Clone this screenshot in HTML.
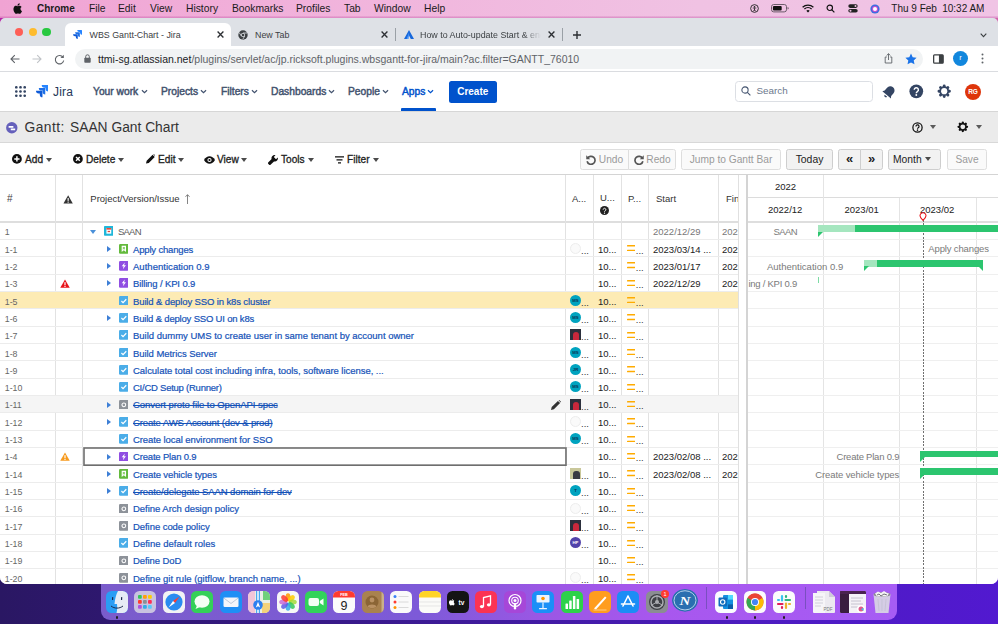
<!DOCTYPE html>
<html lang="en">
<head>
<meta charset="utf-8">
<title>WBS Gantt-Chart - Jira</title>
<style>
*{box-sizing:border-box;margin:0;padding:0}
html,body{width:998px;height:624px;overflow:hidden}
body{position:relative;font-family:"Liberation Sans",sans-serif;background:#3a1a96;color:#222}
.abs{position:absolute}
/* desktop */
#desk{position:absolute;left:0;top:0;width:998px;height:624px;background:linear-gradient(90deg,#2a1763 0%,#38198a 35%,#4c1cc0 75%,#5219d0 100%)}
/* menubar */
#menubar{position:absolute;left:0;top:0;width:998px;height:18px;z-index:5;background:linear-gradient(180deg,rgba(0,0,0,0) 0,rgba(0,0,0,0) 16px,rgba(190,70,160,.38) 17px,rgba(190,70,160,.32) 18px),linear-gradient(90deg,#f0a3d3 0%,#f1b4dc 35%,#f0c2e3 70%,#f0c4e5 100%);font-size:10.3px;color:#1a1a1a;white-space:nowrap}
#menubar span{position:absolute;top:2.5px;line-height:12px}
#menubar b{font-weight:bold;font-size:10px}
/* window */
#win{position:absolute;left:0;top:17px;width:998px;height:567.2px;background:#fff;border-radius:6px 6px 7px 7px;overflow:hidden}
#tabs{position:absolute;left:0;top:0;width:998px;height:29px;background:#dee1e6}
.tl{position:absolute;top:11.2px;width:8.2px;height:8.2px;border-radius:50%}
#tab1{position:absolute;left:65px;top:6px;width:166px;height:23px;background:#fff;border-radius:6px 6px 0 0}
.tabt{position:absolute;top:12px;font-size:8.9px;line-height:12px;color:#3c4043;white-space:nowrap}
.tx{position:absolute;top:9.5px;font-size:11px;line-height:12px;color:#3c4043}
#tb{position:absolute;left:0;top:29px;width:998px;height:26px;background:#fff;border-bottom:1px solid #dadce0}
#omni{position:absolute;left:75px;top:3px;width:848px;height:20px;border-radius:10px;background:#f1f3f4}
#url{position:absolute;left:98px;top:7px;font-size:10.5px;line-height:12px;color:#5f6368;white-space:nowrap}
#url b{font-weight:normal;color:#202124}
/* jira nav */
#nav{position:absolute;left:0;top:55px;width:998px;height:39px;background:#fff;font-size:10.3px;color:#42526e}
#nav .ni{position:absolute;top:14.2px;line-height:12px;font-size:10.25px;white-space:nowrap;-webkit-text-stroke:.45px #42526e}
#nav .ch{position:absolute;top:15.6px;width:7px;height:7px;margin-left:-.5px}
#create{position:absolute;left:449px;top:9px;width:47.5px;height:21.5px;border-radius:2.5px;background:#0052cc;color:#fff;font-weight:bold;font-size:10px;line-height:22px;text-align:center}
#search{position:absolute;left:735.4px;top:8.8px;width:137.4px;height:21.6px;border:1.3px solid #dcdfe4;border-radius:3.5px}
#search span{position:absolute;left:20px;top:3.5px;font-size:9.9px;line-height:12px;color:#6b778c}
/* gantt title */
#gt{position:absolute;left:0;top:94px;width:998px;height:32.5px;background:#ebebeb;border-top:1px solid #d6d6d6;border-bottom:2px solid #d8d8d8}
#gt .t{position:absolute;top:7px;font-size:13.8px;line-height:18px;color:#333;white-space:nowrap}
/* gantt toolbar */
#gtb{position:absolute;left:0;top:126px;width:998px;height:31.5px;background:#fff;border-bottom:1px solid #d4d4d4;font-size:10.15px;color:#222}
#gtb .m{position:absolute;top:10.8px;line-height:12px;white-space:nowrap;-webkit-text-stroke:.3px #222}
.caret{position:absolute;width:0;height:0;border-left:3.9px solid transparent;border-right:3.9px solid transparent;border-top:4.3px solid #4a4a4a;margin-top:-.6px;margin-left:-.6px}
.btn{position:absolute;top:5.5px;height:21.5px;border:1px solid #dedede;border-radius:2.5px;background:#fafafa;font-size:10.2px;line-height:19.5px;color:#9a9a9a;text-align:center;white-space:nowrap}
.btn.dk{color:#222;background:#f2f2f2;border-color:#cecece}
/* table */
#tbl{position:absolute;left:0;top:157.5px;width:998px;height:411px;background:#fff;overflow:hidden}
#th{position:absolute;left:0;top:0;width:739px;height:48px;border-bottom:2px solid #dedede;font-size:9.5px;color:#333}
#th span{position:absolute;line-height:12px;white-space:nowrap}
.vl{position:absolute;top:0;width:1px;background:#e2e2e2}
.row{position:absolute;left:0;width:739px;height:17.33px;border-bottom:1px solid #ececec;font-size:9.5px;line-height:12px;white-space:nowrap;top:0}
.row.hl{background:#fdebb4}
.row.hover{background:#f5f5f5}
.row .c{position:absolute;top:3.6px;color:#222}
.row .num{left:4.8px;color:#666;font-size:8.8px}
.row .tt{position:absolute;top:3.6px;color:#1452b8;text-decoration:none;-webkit-text-stroke:.2px #1452b8}
.row .tt.g{color:#5c5c5c;-webkit-text-stroke:0}
.row .tt.st{text-decoration:line-through}
.row .ti{position:absolute;top:3.9px;width:10px;height:10px;margin-left:.5px}
.ic{display:block;width:9.7px;height:9.7px}
.arr{position:absolute;width:0;height:0}
.arr.rt{top:5.9px;margin-left:.8px;border-top:3.9px solid transparent;border-bottom:3.9px solid transparent;border-left:4.2px solid #3d7fd6}
.arr.dn{top:7.2px;margin-left:.6px;border-left:3.7px solid transparent;border-right:3.7px solid transparent;border-top:4.3px solid #4a90d9}
.warn{position:absolute;left:60px;top:4.6px;width:10px;height:9.5px}
.row .ca{left:570px;top:2.8px}
.row .cu{left:598px}
.row .cp{left:626px}
.row .cs{left:653px}
.row .cf{left:722px}
.row .g{color:#777}
.av{display:inline-block;vertical-align:top;width:11px;height:11px;font-size:4.3px;line-height:11px;text-align:center;color:#fff;font-weight:bold;overflow:hidden;position:relative}
.av.rd{border-radius:50%}
.av.ghost{border-radius:50%;border:1px solid #ededed;background:#fafafa}
.av.ph1{background:#2b2f3c}
.av.ph1 i{position:absolute;left:3px;top:3px;width:6px;height:9px;background:#c8283c;border-radius:3px 3px 0 0}
.av.ph2{background:#c9c79a}
.av.ph2 i{position:absolute;left:3px;top:3px;width:7px;height:9px;background:#3a3a44;border-radius:3px 3px 0 0}
.dots{display:inline-block;vertical-align:top;line-height:14px;color:#333;margin-left:0}
.ca .dots{line-height:15px}
.eq{display:inline-block;vertical-align:top;width:8.2px;height:6.2px;margin-top:1.6px;margin-left:.8px;margin-right:.8px}
.selbox{position:absolute;left:82.5px;top:-1px;width:484px;height:19px}
.pen{position:absolute;left:551px;top:3.8px;width:10px;height:10px}
/* gantt */
#split{position:absolute;left:738px;top:0;width:10px;height:411px;background:#fff;border-left:1px solid #e0e0e0;border-right:2px solid #d4d4d4}
#gantt{position:absolute;left:748px;top:0;width:250px;height:411px;overflow:hidden;font-size:9.5px}
#gantt .hd{position:absolute;line-height:12px;color:#222;white-space:nowrap}
.gl{position:absolute;left:0;width:250px;height:1px;background:#efefef}
.gv{position:absolute;top:0;width:1px;height:411px;background:#e4e4e4}
.glab{position:absolute;color:#7a7a7a;line-height:12px;white-space:nowrap}
.bar{position:absolute;height:7px;background:#2cc56f}
/* dock */
#dock{position:absolute;left:100.5px;top:582px;width:796.5px;height:37.5px;border-radius:0 0 9px 9px;background:linear-gradient(90deg,#7a5ccb 0%,#7d5ad8 40%,#9a57e4 55%,#a857ee 70%,#a65cf4 100%)}
.di{position:absolute;top:9px;width:22px;height:22px;border-radius:5.5px;overflow:hidden}
.dd{position:absolute;top:34.3px;width:2.4px;height:2.4px;border-radius:50%;background:#222}
</style>
</head>
<body>
<div id="desk"></div>
<div class="abs" style="left:0;top:10px;width:998px;height:20px;background:linear-gradient(90deg,#b01ea6,#d46cc8 40%,#e7b6e2 100%)"></div>

<!-- macOS menu bar -->
<div id="menubar">
<svg class="abs" style="left:13px;top:3px;width:9px;height:11px" viewBox="0 0 14 17"><path d="M11.6 9c0-2 1.6-2.9 1.7-3-1-1.400-2.400-1.600-2.900-1.600-1.200-.1-2.400.7-3 .7s-1.600-.7-2.600-.7C3.400 4.400 2.100 5.200 1.400 6.400c-1.500 2.500-.4 6.300 1 8.300.7 1 1.500 2.100 2.600 2.100 1 0 1.400-.7 2.700-.7s1.600.7 2.700.7 1.800-1 2.500-2c.8-1.100 1.100-2.200 1.100-2.300-.1 0-2.400-.9-2.400-3.500zM9.500 3c.6-.7 1-1.600.8-2.600-.8 0-1.800.5-2.400 1.200-.5.600-1 1.600-.8 2.500.9.100 1.800-.4 2.400-1.100z" fill="#111"/></svg>
<span style="left:37px"><b>Chrome</b></span>
<span style="left:89px">File</span>
<span style="left:118px">Edit</span>
<span style="left:150px">View</span>
<span style="left:186px">History</span>
<span style="left:232px">Bookmarks</span>
<span style="left:296px">Profiles</span>
<span style="left:344px">Tab</span>
<span style="left:374px">Window</span>
<span style="left:424px">Help</span>
<!-- right status icons -->
<svg class="abs" style="left:750px;top:4px;width:9px;height:9px" viewBox="0 0 10 10"><circle cx="5" cy="5" r="4.300" fill="none" stroke="#222" stroke-width="1"/><circle cx="5" cy="3.200" r=".9" fill="#222"/><path d="M3 4.500h4M5 4.500v3M3.800 8l1.200-2 1.200 2" stroke="#222" stroke-width=".8" fill="none"/></svg>
<svg class="abs" style="left:771px;top:4.300px;width:18px;height:8.400px" viewBox="0 0 18 8.400"><rect x=".5" y=".5" width="15" height="7.400" rx="2.200" fill="none" stroke="#6a5a68" stroke-width="1"/><rect x="1.900" y="1.900" width="8.800" height="4.600" rx="1.100" fill="#111"/><path d="M16.600 2.900v2.600c.8-.2 1.100-.8 1.100-1.300s-.3-1.100-1.100-1.300z" fill="#6a5a68"/></svg>
<svg class="abs" style="left:802px;top:4px;width:12px;height:9px" viewBox="0 0 12 9"><path d="M.6 3.200a8 8 0 0 1 10.800 0M2.400 5a5.300 5.300 0 0 1 7.200 0" stroke="#111" stroke-width="1.300" fill="none"/><path d="M4.300 6.800a2.500 2.500 0 0 1 3.400 0L6 8.600z" fill="#111"/></svg>
<svg class="abs" style="left:826px;top:4px;width:9px;height:9px" viewBox="0 0 10 10"><circle cx="4.200" cy="4.200" r="3" fill="none" stroke="#111" stroke-width="1.300"/><path d="M6.500 6.500L9.300 9.300" stroke="#111" stroke-width="1.400"/></svg>
<svg class="abs" style="left:848px;top:4px;width:10px;height:9px" viewBox="0 0 10 9"><rect x=".3" y=".3" width="9.400" height="3.600" rx="1.800" fill="#222"/><circle cx="7.500" cy="2.100" r="1" fill="#eec0e0"/><rect x=".3" y="5" width="9.400" height="3.600" rx="1.800" fill="#222"/><circle cx="2.500" cy="6.800" r="1" fill="#eec0e0"/></svg>
<svg class="abs" style="left:870px;top:3.500px;width:10px;height:10px" viewBox="0 0 10 10"><circle cx="5" cy="5" r="4.600" fill="#3b6fe0"/><circle cx="5" cy="5" r="3" fill="#d04ad0"/><circle cx="5" cy="5" r="2" fill="#fff"/></svg>
<span style="left:891.300px;font-size:10px">Thu 9 Feb</span>
<span style="left:942.200px;font-size:10px">10:32 AM</span>
</div>

<!-- Dock -->
<div id="dock">
<div class="di" style="left:5.0px;width:22px;"><svg width="100%" height="100%" viewBox="0 0 22 22" preserveAspectRatio="none" style="display:block"><rect width="22" height="22" fill="#2a9df4"/><path d="M12 0h10v22H10.500c.8-3 .8-6 .5-9H8.500C9 8 10 3.500 12 0z" fill="#e6ecf5"/><path d="M5 15c3.500 2.800 8.500 2.800 12 0" stroke="#1b2a4a" stroke-width="1" fill="none"/><rect x="6" y="6" width="1.200" height="3" rx=".6" fill="#1b2a4a"/><rect x="15" y="6" width="1.200" height="3" rx=".6" fill="#1b2a4a"/></svg></div>
<div class="di" style="left:33.5px;width:22px;"><svg width="100%" height="100%" viewBox="0 0 22 22" preserveAspectRatio="none" style="display:block"><rect width="22" height="22" fill="#c9c2e0"/><rect x="4" y="4" width="3.800" height="3.800" rx="1" fill="#34c759"/><rect x="9" y="4" width="3.800" height="3.800" rx="1" fill="#ff9f0a"/><rect x="14" y="4" width="3.800" height="3.800" rx="1" fill="#ffcc00"/><rect x="4" y="9" width="3.800" height="3.800" rx="1" fill="#ff3b30"/><rect x="9" y="9" width="3.800" height="3.800" rx="1" fill="#8e8e93"/><rect x="14" y="9" width="3.800" height="3.800" rx="1" fill="#ff2d55"/><rect x="4" y="14" width="3.800" height="3.800" rx="1" fill="#af52de"/><rect x="9" y="14" width="3.800" height="3.800" rx="1" fill="#32ade6"/><rect x="14" y="14" width="3.800" height="3.800" rx="1" fill="#5ac8fa"/></svg></div>
<div class="di" style="left:62.0px;width:22px;"><svg width="100%" height="100%" viewBox="0 0 22 22" preserveAspectRatio="none" style="display:block"><rect width="22" height="22" fill="#f2f2f4"/><circle cx="11" cy="11" r="8.600" fill="#2a8cf0"/><path d="M16.500 5.500L12 12l-2-2z" fill="#ff3b30"/><path d="M5.500 16.500L10 10l2 2z" fill="#fff"/></svg></div>
<div class="di" style="left:90.5px;width:22px;"><svg width="100%" height="100%" viewBox="0 0 22 22" preserveAspectRatio="none" style="display:block"><rect width="22" height="22" fill="#34d058"/><ellipse cx="11" cy="10.500" rx="7.500" ry="6.200" fill="#f4fff4"/><path d="M6 14.500l-1.500 3.500 4.500-2z" fill="#f4fff4"/></svg></div>
<div class="di" style="left:119.0px;width:22px;"><svg width="100%" height="100%" viewBox="0 0 22 22" preserveAspectRatio="none" style="display:block"><rect width="22" height="22" fill="#1e8ff5"/><rect x="3.500" y="6.500" width="15" height="9.500" rx="1.200" fill="#f4f6fa"/><path d="M3.800 7l7.200 5.500L18.200 7" stroke="#b8c4d6" stroke-width=".9" fill="none"/></svg></div>
<div class="di" style="left:147.5px;width:22px;"><svg width="100%" height="100%" viewBox="0 0 22 22" preserveAspectRatio="none" style="display:block"><rect width="22" height="22" fill="#e9efe4"/><path d="M0 0h7v22H0z" fill="#f2c5d8"/><path d="M15 0h7v9h-7z" fill="#6fd07a"/><path d="M14 12h8v10h-8z" fill="#f4d27a"/><path d="M8 0h4v22H8z" fill="#4aa8f0"/><path d="M9.300 0h1.400v22H9.300z" fill="#fff"/><circle cx="10" cy="14" r="4.800" fill="#2d7ff0"/><path d="M10 10.800l2.200 5.600L10 15.200l-2.200 1.200z" fill="#fff"/></svg></div>
<div class="di" style="left:176.0px;width:22px;"><svg width="100%" height="100%" viewBox="0 0 22 22" preserveAspectRatio="none" style="display:block"><rect width="22" height="22" fill="#f7f7f7"/><ellipse cx="11" cy="6.200" rx="2.500" ry="4" fill="#ff9500" fill-opacity=".85" transform="rotate(0 11 11)"/><ellipse cx="11" cy="6.200" rx="2.500" ry="4" fill="#ffcc00" fill-opacity=".85" transform="rotate(45 11 11)"/><ellipse cx="11" cy="6.200" rx="2.500" ry="4" fill="#a4d93a" fill-opacity=".85" transform="rotate(90 11 11)"/><ellipse cx="11" cy="6.200" rx="2.500" ry="4" fill="#34c759" fill-opacity=".85" transform="rotate(135 11 11)"/><ellipse cx="11" cy="6.200" rx="2.500" ry="4" fill="#32ade6" fill-opacity=".85" transform="rotate(180 11 11)"/><ellipse cx="11" cy="6.200" rx="2.500" ry="4" fill="#5e5ce6" fill-opacity=".85" transform="rotate(225 11 11)"/><ellipse cx="11" cy="6.200" rx="2.500" ry="4" fill="#c86dd7" fill-opacity=".85" transform="rotate(270 11 11)"/><ellipse cx="11" cy="6.200" rx="2.500" ry="4" fill="#ff3b30" fill-opacity=".85" transform="rotate(315 11 11)"/></svg></div>
<div class="di" style="left:204.0px;width:22px;"><svg width="100%" height="100%" viewBox="0 0 22 22" preserveAspectRatio="none" style="display:block"><rect width="22" height="22" fill="#32d35a"/><rect x="3.500" y="7" width="10.500" height="8" rx="2" fill="#f4fff4"/><path d="M14.800 10l3.700-2.600v7.200L14.800 12z" fill="#f4fff4"/></svg></div>
<div class="di" style="left:232.5px;width:22px;"><svg width="100%" height="100%" viewBox="0 0 22 22" preserveAspectRatio="none" style="display:block"><rect width="22" height="22" fill="#fbfbfb"/><rect width="22" height="6.500" fill="#ff3b30"/><text x="11" y="5" font-size="3.800" text-anchor="middle" fill="#fff" font-family="Liberation Sans, sans-serif" font-weight="bold">FEB</text><text x="11" y="18.500" font-size="12.500" text-anchor="middle" fill="#222" font-family="Liberation Sans, sans-serif">9</text></svg></div>
<div class="di" style="left:261.0px;width:22px;"><svg width="100%" height="100%" viewBox="0 0 22 22" preserveAspectRatio="none" style="display:block"><rect width="22" height="22" fill="#a9824f"/><rect x="19.500" width="2.500" height="22" fill="#c9b08a"/><circle cx="10" cy="11" r="6.500" fill="#8b6535"/><circle cx="10" cy="9" r="2.400" fill="#b99163"/><path d="M5.500 15.500c1-2.800 8-2.800 9 0a6.500 6.500 0 0 1-9 0z" fill="#b99163"/></svg></div>
<div class="di" style="left:289.5px;width:22px;"><svg width="100%" height="100%" viewBox="0 0 22 22" preserveAspectRatio="none" style="display:block"><rect width="22" height="22" fill="#fafafa"/><circle cx="5" cy="5.500" r="1.500" fill="#3b82f6"/><circle cx="5" cy="11" r="1.500" fill="#ff3b30"/><circle cx="5" cy="16.500" r="1.500" fill="#ff9500"/><path d="M8.500 5.500h10M8.500 11h10M8.500 16.500h10" stroke="#d6d6d6" stroke-width=".9"/></svg></div>
<div class="di" style="left:318.0px;width:22px;"><svg width="100%" height="100%" viewBox="0 0 22 22" preserveAspectRatio="none" style="display:block"><rect width="22" height="22" fill="#fbfbf8"/><rect width="22" height="6.500" fill="#ffd426"/><path d="M0 11h22M0 15h22" stroke="#dedede" stroke-width=".7"/></svg></div>
<div class="di" style="left:346.0px;width:22px;"><svg width="100%" height="100%" viewBox="0 0 22 22" preserveAspectRatio="none" style="display:block"><rect width="22" height="22" fill="#141414"/><path d="M7.200 9.800c-.5-.6-1.200-.6-1.700-.4-.5.200-.8.200-1.300 0-1-.4-2.200.4-2.200 2 0 1.500 1 3 1.900 3 .5 0 .7-.3 1.200-.3s.7.300 1.200.3c.6 0 1.200-.8 1.500-1.600-1.200-.6-1.200-2.300-.6-3z M5.200 9c.5-.1 1-.7.9-1.300-.6.100-1.100.6-.9 1.300z" fill="#fff"/><text x="14.500" y="14" font-size="6.500" text-anchor="middle" fill="#fff" font-family="Liberation Sans, sans-serif" font-weight="bold">tv</text></svg></div>
<div class="di" style="left:374.5px;width:22px;"><svg width="100%" height="100%" viewBox="0 0 22 22" preserveAspectRatio="none" style="display:block"><rect width="22" height="22" fill="#fb3353"/><path d="M8.500 15.500V6.500l7-1.700v8.700" stroke="#fff" stroke-width="1.300" fill="none"/><ellipse cx="6.900" cy="15.600" rx="2" ry="1.600" fill="#fff"/><ellipse cx="13.900" cy="13.800" rx="2" ry="1.600" fill="#fff"/></svg></div>
<div class="di" style="left:403.0px;width:22px;"><svg width="100%" height="100%" viewBox="0 0 22 22" preserveAspectRatio="none" style="display:block"><rect width="22" height="22" fill="#a647d8"/><circle cx="11" cy="9.500" r="6" fill="none" stroke="#fff" stroke-width="1.200"/><circle cx="11" cy="9.500" r="3.300" fill="none" stroke="#fff" stroke-width="1.100"/><circle cx="11" cy="9.500" r="1.500" fill="#fff"/><rect x="9.800" y="12" width="2.400" height="6.500" rx="1.200" fill="#fff"/><rect x="8" y="13.200" width="6" height="6" fill="#a647d8" opacity="0"/></svg></div>
<div class="di" style="left:431.5px;width:22px;"><svg width="100%" height="100%" viewBox="0 0 22 22" preserveAspectRatio="none" style="display:block"><rect width="22" height="22" fill="#1b8ff7"/><rect x="4.500" y="4" width="13" height="7.500" rx=".8" fill="#eaf3ff"/><circle cx="11" cy="7.500" r="1.800" fill="#ff9500"/><rect x="10.400" y="11.500" width="1.200" height="6" fill="#eaf3ff"/><rect x="7" y="17" width="8" height="1.200" rx=".5" fill="#eaf3ff"/></svg></div>
<div class="di" style="left:460.0px;width:22px;"><svg width="100%" height="100%" viewBox="0 0 22 22" preserveAspectRatio="none" style="display:block"><rect width="22" height="22" fill="#2dd24a"/><rect x="4.500" y="12.500" width="2.500" height="5.500" rx=".6" fill="#fff"/><rect x="8.200" y="9.500" width="2.500" height="8.500" rx=".6" fill="#fff"/><rect x="11.900" y="5" width="2.500" height="13" rx=".6" fill="#fff"/><rect x="15.600" y="8" width="2.500" height="10" rx=".6" fill="#fff"/></svg></div>
<div class="di" style="left:488.0px;width:22px;"><svg width="100%" height="100%" viewBox="0 0 22 22" preserveAspectRatio="none" style="display:block"><rect width="22" height="22" fill="#ff9d1e"/><path d="M5 17.500L16 5.500l1.500 1.300L7 18.500z" fill="#fff"/><path d="M4.500 19h13" stroke="#ffd9a0" stroke-width=".8"/></svg></div>
<div class="di" style="left:516.5px;width:22px;"><svg width="100%" height="100%" viewBox="0 0 22 22" preserveAspectRatio="none" style="display:block"><rect width="22" height="22" fill="#1c8df5"/><path d="M11 5l-5 10M11 5l5 10M4.500 13h13" stroke="#fff" stroke-width="1.600" fill="none" stroke-linecap="round"/></svg></div>
<div class="di" style="left:545.0px;width:22px;"><svg width="100%" height="100%" viewBox="0 0 22 22" preserveAspectRatio="none" style="display:block"><rect width="22" height="22" fill="#8b8d92"/><circle cx="11" cy="11" r="8" fill="#3e4045"/><circle cx="11" cy="11" r="6" fill="none" stroke="#a9abb0" stroke-width="1.500"/><circle cx="11" cy="11" r="2" fill="#a9abb0"/><path d="M11 11V4M11 11l6 3.500M11 11l-6 3.500" stroke="#a9abb0" stroke-width="1"/></svg></div>
<div class="abs" style="left:560.5px;top:7.500px;width:8px;height:8px;border-radius:50%;background:#ff3b30;color:#fff;font-size:5.500px;line-height:8px;text-align:center">1</div>
<div class="di" style="left:571.5px;width:26px;top:7.300px;height:22.700px;border-radius:50%"><svg width="100%" height="100%" viewBox="0 0 26 26" preserveAspectRatio="none" style="display:block"><circle cx="13" cy="13" r="13" fill="#2a6fb0"/><circle cx="13" cy="13" r="11" fill="none" stroke="#bcd6ee" stroke-width="1"/><text x="13" y="18" font-size="15" text-anchor="middle" fill="#fff" font-family="Liberation Serif, serif" font-weight="bold" font-style="italic">N</text></svg></div>
<div class="abs" style="left:605.0px;top:5px;width:1px;height:22px;background:#7a4fc0"></div>
<div class="di" style="left:614.5px;width:22px;"><svg width="100%" height="100%" viewBox="0 0 22 22" preserveAspectRatio="none" style="display:block"><rect width="22" height="22" fill="#fafcff"/><rect x="8" y="4" width="10" height="14" rx="1" fill="#1490df"/><rect x="13" y="4" width="5" height="4.600" fill="#50d9ff"/><rect x="13" y="13.400" width="5" height="4.600" fill="#0a5ea8"/><rect x="3.500" y="6.500" width="8.500" height="9" rx="1" fill="#0f6cbd"/><circle cx="7.700" cy="11" r="2.200" fill="none" stroke="#fff" stroke-width="1.100"/></svg></div>
<div class="di" style="left:643.0px;width:22px;"><svg width="100%" height="100%" viewBox="0 0 22 22" preserveAspectRatio="none" style="display:block"><rect width="22" height="22" fill="#fbfbfb"/><circle cx="11" cy="11" r="8.500" fill="#ea4335"/><path d="M11 11L3.640 6.750A8.500 8.500 0 0 0 11 19.500z" fill="#34a853"/><path d="M11 11v8.500A8.500 8.500 0 0 0 18.360 6.750z" fill="#fbbc05"/><path d="M3.640 6.750A8.500 8.500 0 0 1 18.360 6.750L11 11z" fill="#ea4335"/><circle cx="11" cy="11" r="4" fill="#fff"/><circle cx="11" cy="11" r="3.100" fill="#4285f4"/></svg></div>
<div class="di" style="left:672.0px;width:22px;"><svg width="100%" height="100%" viewBox="0 0 22 22" preserveAspectRatio="none" style="display:block"><rect width="22" height="22" fill="#fbfbfb"/><g stroke-width="2.200" stroke-linecap="round"><path d="M9 5v4.500" stroke="#36c5f0"/><path d="M5 9h1" stroke="#36c5f0"/><path d="M13 17v-4.500" stroke="#ecb22e"/><path d="M17 13h-1" stroke="#ecb22e"/><path d="M17 9h-4.500" stroke="#2eb67d"/><path d="M13 5v1" stroke="#2eb67d"/><path d="M5 13h4.500" stroke="#e01e5a"/><path d="M9 17v-1" stroke="#e01e5a"/></g></svg></div>
<div class="abs" style="left:704.0px;top:5px;width:1px;height:22px;background:#7a4fc0"></div>
<div class="di" style="left:712.0px;width:22px;border-radius:1px"><svg width="100%" height="100%" viewBox="0 0 22 22" preserveAspectRatio="none" style="display:block"><path d="M4 0h12l6 6v16H4z" fill="#eceaf0"/><path d="M0 2h12v20H0z" fill="#f6f5f8"/><path d="M16 0v6h6z" fill="#cfcbd8"/><path d="M2 6h8M2 9h8M2 12h8M2 15h6" stroke="#c9c6d2" stroke-width=".8"/><text x="15" y="20" font-size="4.500" text-anchor="middle" fill="#777" font-family="Liberation Sans, sans-serif">PDF</text></svg></div>
<div class="di" style="left:739.5px;width:26px;border-radius:1px"><svg width="100%" height="100%" viewBox="0 0 26 22" preserveAspectRatio="none" style="display:block"><rect width="26" height="22" fill="#f4f2f6"/><rect width="9" height="22" fill="#3a1d3f"/><rect width="26" height="3" fill="#4a2350"/><path d="M11 7h12M11 10h10M11 13h12M11 16h7" stroke="#bdb8c8" stroke-width=".8"/><circle cx="21" cy="18" r="4" fill="#fff"/><circle cx="21" cy="18" r="2.500" fill="#e05a8a"/><path d="M21 18l2.500-1v3z" fill="#36c5f0"/></svg></div>
<div class="di" style="left:771.0px;width:20px;border-radius:1px"><svg width="100%" height="100%" viewBox="0 0 20 22" preserveAspectRatio="none" style="display:block"><path d="M1.500 3h17l-2 19h-13z" fill="#d9d6e4" fill-opacity=".92"/><ellipse cx="10" cy="3.500" rx="8.500" ry="2.500" fill="#8d8a96"/><path d="M3 2.500l3-2 3 1.500 3-2 3 2 2 .5-2 3H5z" fill="#f3f3f3"/><path d="M5 4l2-1 2 2 3-2 3 1" stroke="#55525e" stroke-width=".8" fill="none"/><path d="M6 8l1 12M10 8v12M14 8l-1 12" stroke="#c2bfd0" stroke-width=".7"/></svg></div>
<div class="dd" style="left:15.0px"></div>
<div class="dd" style="left:625.0px"></div>
<div class="dd" style="left:653.5px"></div>
<div class="dd" style="left:682.5px"></div>
</div>
<svg class="abs" style="left:0;top:18px;width:5px;height:5px;z-index:6" viewBox="0 0 5 5"><path d="M0 0h5A5 5 0 0 0 0 5z" fill="#b526a8"/></svg>
<svg class="abs" style="left:993px;top:18px;width:5px;height:5px;z-index:6" viewBox="0 0 5 5"><path d="M5 0H0A5 5 0 0 1 5 5z" fill="#d263ad"/></svg>
<!-- Chrome window -->
<div id="win">
 <div id="tabs">
  <div class="tl" style="left:14.600px;background:#fe5f57"></div>
  <div class="tl" style="left:28.500px;background:#febc2e"></div>
  <div class="tl" style="left:42.400px;background:#28c840"></div>
  <div id="tab1"></div>
  <svg class="abs" style="left:73px;top:13px;width:9px;height:9px" viewBox="0 0 10 10"><path d="M9.500 0H4.700a2.200 2.200 0 0 0 2.200 2.200h.9v.9A2.200 2.200 0 0 0 10 5.300V.5a.5.500 0 0 0-.5-.5z" fill="#2684ff"/><path d="M7.100 2.400H2.300a2.200 2.200 0 0 0 2.200 2.200h.9v.9a2.200 2.200 0 0 0 2.200 2.200V2.900a.5.500 0 0 0-.5-.5z" fill="#1d6fe6"/><path d="M4.800 4.800H0A2.200 2.200 0 0 0 2.200 7h.9v.9A2.200 2.200 0 0 0 5.300 10V5.300a.5.500 0 0 0-.5-.5z" fill="#0f5bd8"/></svg>
  <span class="tabt" style="left:89.500px">WBS Gantt-Chart - Jira</span>
  <svg class="abs" style="left:217px;top:14px;width:7px;height:7px;margin:-.5px" viewBox="0 0 6 6"><path d="M.5.500l5 5M5.500.500l-5 5" stroke="#2c2f33" stroke-width="1.150"/></svg>
  <svg class="abs" style="left:238px;top:12.5px;width:10px;height:10px" viewBox="0 0 10 10"><circle cx="5" cy="5" r="4.700" fill="#3c4043"/><circle cx="5" cy="5" r="2.100" fill="#dee1e6"/><circle cx="5" cy="5" r="1.300" fill="#3c4043"/><path d="M5 3h4M3.300 6L1.200 2.600M6.700 6l-2 3.400" stroke="#dee1e6" stroke-width=".8"/></svg>
  <span class="tabt" style="left:255px">New Tab</span>
  <svg class="abs" style="left:381px;top:14px;width:7px;height:7px;margin:-.5px" viewBox="0 0 6 6"><path d="M.5.500l5 5M5.500.500l-5 5" stroke="#2c2f33" stroke-width="1.150"/></svg>
  <div class="abs" style="left:395px;top:11px;width:1px;height:13px;background:#9aa0a6"></div>
  <svg class="abs" style="left:404px;top:13px;width:10px;height:9px" viewBox="0 0 10 9"><path d="M5 0L0 9h3.200L5 5.500 6.800 9H10z" fill="#1868db"/><path d="M5 2.800L2.600 9h2z" fill="#4c9aff"/></svg>
  <span class="tabt" style="left:420px;width:121px;overflow:hidden;-webkit-mask-image:linear-gradient(90deg,#000 85%,transparent)">How to Auto-update Start &amp; end</span>
  <svg class="abs" style="left:548px;top:14px;width:7px;height:7px;margin:-.5px" viewBox="0 0 6 6"><path d="M.5.500l5 5M5.500.500l-5 5" stroke="#2c2f33" stroke-width="1.150"/></svg>
  <div class="abs" style="left:562px;top:11px;width:1px;height:13px;background:#9aa0a6"></div>
  <svg class="abs" style="left:573px;top:13.5px;width:8px;height:8px" viewBox="0 0 8 8"><path d="M4 0v8M0 4h8" stroke="#2c2f33" stroke-width="1.400"/></svg>
  <svg class="abs" style="left:980px;top:15.5px;width:7px;height:5px" viewBox="0 0 7 5"><path d="M.7.700L3.500 3.600 6.300.7" stroke="#3c4043" stroke-width="1.100" fill="none"/></svg>
 </div>
 <div id="tb">
  <svg class="abs" style="left:10px;top:8px;width:10px;height:10px" viewBox="0 0 10 10"><path d="M9.500 5H1.200M4.800 1.200L1 5l3.800 3.800" stroke="#5f6368" stroke-width="1.100" fill="none"/></svg>
  <svg class="abs" style="left:32px;top:8px;width:10px;height:10px" viewBox="0 0 10 10"><path d="M.5 5h8.300M5.200 1.200L9 5 5.200 8.800" stroke="#c0c3c7" stroke-width="1.100" fill="none"/></svg>
  <svg class="abs" style="left:54px;top:7.500px;width:11px;height:11px" viewBox="0 0 11 11"><path d="M9 3.200A4.200 4.200 0 1 0 9.700 6.500" stroke="#5f6368" stroke-width="1.100" fill="none"/><path d="M9.800.8v3.300H6.500z" fill="#5f6368"/></svg>
  <div id="omni"></div>
  <svg class="abs" style="left:84px;top:8px;width:7px;height:9px" viewBox="0 0 7 9"><rect x=".3" y="3.700" width="6.400" height="5" rx=".8" fill="#5f6368"/><path d="M1.700 4V2.600a1.800 1.800 0 0 1 3.600 0V4" stroke="#5f6368" stroke-width="1" fill="none"/></svg>
  <div id="url"><b>ttmi-sg.atlassian.net</b>/plugins/servlet/ac/jp.ricksoft.plugins.wbsgantt-for-jira/main?ac.filter=GANTT_76010</div>
  <svg class="abs" style="left:884px;top:7px;width:9px;height:11px" viewBox="0 0 9 11"><path d="M2.800 4H1.200v6h6.600V4H6.200M4.500 7V.8M2.600 2.500L4.500.7l1.900 1.800" stroke="#5f6368" stroke-width=".9" fill="none"/></svg>
  <svg class="abs" style="left:905px;top:6.500px;width:12px;height:12px" viewBox="0 0 12 12"><path d="M6 .6l1.700 3.600 3.900.5-2.900 2.700.8 3.900L6 9.400l-3.500 1.900.8-3.900L.4 4.700l3.900-.5z" fill="#1a73e8"/></svg>
  <svg class="abs" style="left:932.800px;top:7.500px;width:10.800px;height:10px" viewBox="0 0 10 9"><rect x=".6" y=".6" width="8.800" height="7.800" rx=".8" fill="none" stroke="#3c4043" stroke-width="1.200"/><rect x="5.500" y=".6" width="3.900" height="7.800" fill="#3c4043"/></svg>
  <div class="abs" style="left:953px;top:5px;width:15px;height:15px;border-radius:50%;background:#1287dd;color:#fff;font-size:7.500px;line-height:14px;text-align:center">r</div>
  <svg class="abs" style="left:980.700px;top:7px;width:3px;height:11px" viewBox="0 0 3 11"><circle cx="1.500" cy="1.500" r="1" fill="#5f6368"/><circle cx="1.500" cy="5.500" r="1" fill="#5f6368"/><circle cx="1.500" cy="9.500" r="1" fill="#5f6368"/></svg>
 </div>

 <!-- Jira navigation -->
 <div id="nav">
  <svg class="abs" style="left:15px;top:14px;width:11px;height:11px" viewBox="0 0 11 11"><g fill="#344563"><rect x="0" y="0" width="2.600" height="2.600" rx="1.200"/><rect x="4.200" y="0" width="2.600" height="2.600" rx="1.200"/><rect x="8.400" y="0" width="2.600" height="2.600" rx="1.200"/><rect x="0" y="4.200" width="2.600" height="2.600" rx="1.200"/><rect x="4.200" y="4.200" width="2.600" height="2.600" rx="1.200"/><rect x="8.400" y="4.200" width="2.600" height="2.600" rx="1.200"/><rect x="0" y="8.400" width="2.600" height="2.600" rx="1.200"/><rect x="4.200" y="8.400" width="2.600" height="2.600" rx="1.200"/><rect x="8.400" y="8.400" width="2.600" height="2.600" rx="1.200"/></g></svg>
  <svg class="abs" style="left:36px;top:13.400px;width:12.200px;height:12.200px" viewBox="0 0 10 10"><path d="M9.500 0H4.700a2.200 2.200 0 0 0 2.200 2.200h.9v.9A2.200 2.200 0 0 0 10 5.300V.5a.5.500 0 0 0-.5-.5z" fill="#2684ff"/><path d="M7.100 2.400H2.300a2.200 2.200 0 0 0 2.200 2.200h.9v.9a2.200 2.200 0 0 0 2.200 2.200V2.900a.5.500 0 0 0-.5-.5z" fill="#1d6fe6"/><path d="M4.800 4.800H0A2.200 2.200 0 0 0 2.200 7h.9v.9A2.200 2.200 0 0 0 5.300 10V5.300a.5.500 0 0 0-.5-.5z" fill="#0f5bd8"/></svg>
  <span class="abs" style="left:53px;top:10.700px;font-size:12px;line-height:18px;color:#253858;letter-spacing:.2px">Jira</span>
  <span class="ni" style="left:93px">Your work</span><svg class="ch" style="left:141px" viewBox="0 0 6 6"><path d="M.8 1.900L3 4.100 5.200 1.900" fill="none" stroke="#42526e" stroke-width="1"/></svg>
  <span class="ni" style="left:161px">Projects</span><svg class="ch" style="left:200.5px" viewBox="0 0 6 6"><path d="M.8 1.900L3 4.100 5.200 1.900" fill="none" stroke="#42526e" stroke-width="1"/></svg>
  <span class="ni" style="left:221px">Filters</span><svg class="ch" style="left:251.5px" viewBox="0 0 6 6"><path d="M.8 1.900L3 4.100 5.200 1.900" fill="none" stroke="#42526e" stroke-width="1"/></svg>
  <span class="ni" style="left:271px">Dashboards</span><svg class="ch" style="left:328.5px" viewBox="0 0 6 6"><path d="M.8 1.900L3 4.100 5.200 1.900" fill="none" stroke="#42526e" stroke-width="1"/></svg>
  <span class="ni" style="left:348px">People</span><svg class="ch" style="left:382.5px" viewBox="0 0 6 6"><path d="M.8 1.900L3 4.100 5.200 1.900" fill="none" stroke="#42526e" stroke-width="1"/></svg>
  <span class="ni" style="left:402px;color:#0052cc;-webkit-text-stroke-color:#0052cc">Apps</span><svg class="ch" style="left:427.5px" viewBox="0 0 6 6"><path d="M.8 1.900L3 4.100 5.200 1.900" fill="none" stroke="#0052cc" stroke-width="1"/></svg>
  <div class="abs" style="left:401px;top:36px;width:34.500px;height:3px;background:#0052cc;border-radius:1px 1px 0 0"></div>
  <div id="create">Create</div>
  <div id="search"><svg class="abs" style="left:4.500px;top:4.200px;width:10px;height:10px" viewBox="0 0 8 8"><circle cx="3.200" cy="3.200" r="2.500" fill="none" stroke="#42526e" stroke-width=".85"/><path d="M5.100 5.100L7.500 7.500" stroke="#42526e" stroke-width=".85"/></svg><span>Search</span></div>
  <svg class="abs" style="left:881px;top:12px;width:16px;height:16px" viewBox="0 0 14 14"><g transform="rotate(40 7 7)"><path d="M7 1.500a3.700 3.700 0 0 1 3.700 3.700v3.300l1.200 1.700H2.100l1.200-1.700V5.200A3.700 3.700 0 0 1 7 1.500z" fill="#344563"/><path d="M5.600 11.200a1.400 1.400 0 0 0 2.800 0z" fill="#344563"/></g></svg>
  <svg class="abs" style="left:909px;top:12.200px;width:14.600px;height:14.600px" viewBox="0 0 14 14"><circle cx="7" cy="7" r="6.600" fill="#344563"/><path d="M5 5.600a2 2 0 1 1 3 1.700c-.7.400-1 .8-1 1.500" stroke="#fff" stroke-width="1.400" fill="none"/><circle cx="7" cy="10.600" r=".9" fill="#fff"/></svg>
  <svg class="abs" style="left:937px;top:12.300px;width:14.400px;height:14.400px" viewBox="0 0 14 14"><g stroke="#344563" stroke-width="2.800" stroke-linecap="round"><path d="M7 1.900v10.200M1.900 7h10.200M3.400 3.400l7.200 7.200M10.600 3.400l-7.200 7.200"/></g><circle cx="7" cy="7" r="4.700" fill="#344563"/><circle cx="7" cy="7" r="3" fill="#fff"/></svg>
  <div class="abs" style="left:965px;top:11.500px;width:16px;height:16px;border-radius:50%;background:#de350b;color:#fff;font-size:6.500px;line-height:16px;text-align:center;font-weight:bold">RG</div>
 </div>

 <!-- Gantt title bar -->
 <div id="gt">
  <svg class="abs" style="left:6px;top:10px;width:11.600px;height:11.600px" viewBox="0 0 11 11"><circle cx="5.500" cy="5.500" r="5.400" fill="#6560bb"/><path d="M2.500 3.800h4.500v1.600H2.500zM4.500 6.200h4.200v1.600H4.500z" fill="#fff"/></svg>
  <span class="t" style="left:24.500px;letter-spacing:.45px">Gantt:</span>
  <span class="t" style="left:70px">SAAN Gant Chart</span>
  <svg class="abs" style="left:911.500px;top:9.500px;width:11px;height:11px" viewBox="0 0 10 10"><circle cx="5" cy="5" r="4.200" fill="none" stroke="#111" stroke-width="1.150"/><path d="M3.600 4a1.400 1.400 0 1 1 2.100 1.200c-.5.300-.7.500-.7 1" stroke="#111" stroke-width="1.100" fill="none"/><circle cx="5" cy="7.400" r=".7" fill="#111"/></svg>
  <i class="caret" style="left:931px;top:13.500px;border-top-color:#5a5a5a"></i>
  <svg class="abs" style="left:957px;top:9.200px;width:11.600px;height:11.600px" viewBox="0 0 14 14"><g stroke="#111" stroke-width="2.800" stroke-linecap="round"><path d="M7 1.900v10.200M1.900 7h10.200M3.400 3.400l7.200 7.200M10.600 3.400l-7.200 7.200"/></g><circle cx="7" cy="7" r="4.700" fill="#111"/><circle cx="7" cy="7" r="2.900" fill="#ebebeb"/></svg>
  <i class="caret" style="left:977px;top:13.500px;border-top-color:#5a5a5a"></i>
 </div>

 <!-- Gantt toolbar -->
 <div id="gtb">
  <svg class="abs" style="left:12.300px;top:11.400px;width:9.800px;height:9.800px" viewBox="0 0 10 10"><circle cx="5" cy="5" r="5" fill="#111"/><path d="M5 2.300v5.400M2.300 5h5.400" stroke="#fff" stroke-width="1.500"/></svg>
  <span class="m" style="left:25px">Add</span><i class="caret" style="left:46.300px;top:15.200px"></i>
  <svg class="abs" style="left:73.400px;top:11.400px;width:9.800px;height:9.800px" viewBox="0 0 10 10"><circle cx="5" cy="5" r="5" fill="#111"/><path d="M3.100 3.100l3.800 3.800M6.900 3.100L3.100 6.900" stroke="#fff" stroke-width="1.500"/></svg>
  <span class="m" style="left:86px">Delete</span><i class="caret" style="left:118.200px;top:15.200px"></i>
  <svg class="abs" style="left:145.600px;top:11.300px;width:9.600px;height:9.600px" viewBox="0 0 10 10"><path d="M0 10l.7-2.900L6.900.9l2.200 2.200-6.200 6.200z M7.600.3l.6-.3 1.800 1.800-.3.600z" fill="#111"/></svg>
  <span class="m" style="left:158px">Edit</span><i class="caret" style="left:179px;top:15.200px"></i>
  <svg class="abs" style="left:204px;top:12.8px;width:11px;height:8px" viewBox="0 0 11 8"><path d="M0 4C1.500 1.500 3.300.3 5.500.3S9.500 1.500 11 4C9.500 6.500 7.700 7.700 5.500 7.700S1.500 6.500 0 4z" fill="#111"/><circle cx="5.500" cy="4" r="2.100" fill="#fff"/><circle cx="5.500" cy="4" r="1.100" fill="#111"/></svg>
  <span class="m" style="left:217px">View</span><i class="caret" style="left:242px;top:15.200px"></i>
  <svg class="abs" style="left:268px;top:11.8px;width:10px;height:10px" viewBox="0 0 10 10"><path d="M9.700 2.500L8 4.200 5.800 2 7.500.3A3 3 0 0 0 3.600 4L.4 7.200a1.300 1.300 0 0 0 0 1.900l.5.500a1.300 1.300 0 0 0 1.900 0L6 6.400a3 3 0 0 0 3.700-3.900z" fill="#111"/></svg>
  <span class="m" style="left:281px">Tools</span><i class="caret" style="left:308.500px;top:15.200px"></i>
  <svg class="abs" style="left:335px;top:12.8px;width:9px;height:8px" viewBox="0 0 9 8"><path d="M0 .8h9M1.500 3.800h6M3 6.800h3" stroke="#111" stroke-width="1.200"/></svg>
  <span class="m" style="left:347px">Filter</span><i class="caret" style="left:373.500px;top:15.200px"></i>

  <div class="btn" style="left:580px;width:49px;border-radius:2.500px 0 0 2.500px;padding-left:13px">Undo</div>
  <div class="btn" style="left:628px;width:48px;border-radius:0 2.500px 2.500px 0;padding-left:13px">Redo</div>
  <svg class="abs" style="left:585.500px;top:11.500px;width:10px;height:10px" viewBox="0 0 9 9"><path d="M1.300 3.200A3.600 3.600 0 1 1 1 5.600" stroke="#555" stroke-width="1.500" fill="none"/><path d="M.2.300v3.600h3.600z" fill="#555"/></svg>
  <svg class="abs" style="left:634px;top:11.500px;width:10px;height:10px" viewBox="0 0 9 9"><path d="M7.700 3.200A3.600 3.600 0 1 0 8 5.600" stroke="#555" stroke-width="1.500" fill="none"/><path d="M8.800.3v3.600H5.200z" fill="#555"/></svg>
  <div class="btn" style="left:681px;width:100px">Jump to Gantt Bar</div>
  <div class="btn dk" style="left:786px;width:47px;font-size:10.400px">Today</div>
  <div class="btn dk" style="left:838px;width:23px;border-radius:2.500px 0 0 2.500px;font-weight:bold;font-size:13px;line-height:17px">«</div>
  <div class="btn dk" style="left:860px;width:23px;border-radius:0 2.500px 2.500px 0;font-weight:bold;font-size:13px;line-height:17px">»</div>
  <div class="btn dk" style="left:888px;width:53px;text-align:left;padding-left:4px;font-size:10.300px">Month</div><i class="caret" style="left:926px;top:14.500px"></i>
  <div class="btn" style="left:947px;width:40px">Save</div>
 </div>

 <!-- Table -->
 <div id="tbl">
  <div id="th">
   <span style="left:7px;top:18.500px;color:#444;font-size:10px">#</span>
   <svg class="abs" style="left:63.200px;top:20px;width:10.300px;height:9px" viewBox="0 0 12 11"><path d="M6 .4L11.700 10.400H.3z" fill="#333"/><rect x="5.300" y="3.600" width="1.400" height="3.600" fill="#fff"/><rect x="5.300" y="8" width="1.400" height="1.400" fill="#fff"/></svg>
   <span style="left:90.300px;top:18.500px">Project/Version/Issue</span>
   <svg class="abs" style="left:185px;top:19px;width:5px;height:10px" viewBox="0 0 5 10"><path d="M2.500 10V1M.5 2.800L2.500.6l2 2.200" stroke="#666" stroke-width=".8" fill="none"/></svg>
   <span style="left:572px;top:18.500px">A...</span>
   <span style="left:600px;top:17px">U...</span>
   <svg class="abs" style="left:600px;top:31px;width:9px;height:9px" viewBox="0 0 10 10"><circle cx="5" cy="5" r="5" fill="#222"/><path d="M3.500 4a1.500 1.500 0 1 1 2.300 1.300c-.6.300-.8.600-.8 1.100" stroke="#fff" stroke-width="1.100" fill="none"/><circle cx="5" cy="8" r=".7" fill="#fff"/></svg>
   <span style="left:628px;top:18.500px">P...</span>
   <span style="left:656px;top:18.500px">Start</span>
   <span style="left:726px;top:18.500px">Fin</span>
  </div>
  <div class="vl" style="left:55px;height:411px"></div>
  <div class="vl" style="left:82px;height:411px"></div>
  <div class="vl" style="left:565px;height:411px"></div>
  <div class="vl" style="left:593px;height:411px"></div>
  <div class="vl" style="left:621px;height:411px"></div>
  <div class="vl" style="left:648.300px;height:411px"></div>
  <div class="vl" style="left:718px;height:411px"></div>
  <div id="rows" style="position:absolute;left:0;top:-174.500px;width:739px;height:568px">
<div class="row grey" style="top:222.60px"><span class="c num">1</span><span class="arr dn" style="left:89px"></span><span class="ti" style="left:103px"><svg class="ic" viewBox="0 0 12 12"><rect width="12" height="12" rx="1" fill="#1fb6d9"/><rect x="3" y="2.5" width="6" height="7" fill="#fff"/><rect x="3" y="2.5" width="6" height="2" fill="#e5493a"/><rect x="4.5" y="6" width="3" height="1.6" fill="#e5493a"/></svg></span><span class="tt g" style="left:118px;letter-spacing:-0.794px">SAAN</span><span class="c ca"></span><span class="c cs g">2022/12/29</span><span class="c cf g">202</span></div>
<div class="row " style="top:239.93px"><span class="c num">1-1</span><span class="arr rt" style="left:106px"></span><span class="ti" style="left:118px"><svg class="ic" viewBox="0 0 12 12"><rect width="12" height="12" rx="1.5" fill="#63ba3c"/><path d="M3.300 2.300h5.400v7.600L6 7.700 3.300 9.900z" fill="#fff"/><path d="M4.700 3.700h2.600v3.400L6 6.200 4.700 7.100z" fill="#8fd06f"/></svg></span><a class="tt" style="left:133px;letter-spacing:-0.164px">Apply changes</a><span class="c ca"><span class="av ghost"></span><span class="dots">...</span></span><span class="c cu">10...</span><span class="c cp"><svg class="eq" viewBox="0 0 8.2 6.2"><rect width="8.2" height="1.55" rx=".5" fill="#ffab00"/><rect y="4.65" width="8.2" height="1.55" rx=".5" fill="#ffab00"/></svg><span class="dots">...</span></span><span class="c cs">2023/03/14 ...</span><span class="c cf">202</span></div>
<div class="row " style="top:257.26px"><span class="c num">1-2</span><span class="arr rt" style="left:106px"></span><span class="ti" style="left:118px"><svg class="ic" viewBox="0 0 12 12"><rect width="12" height="12" rx="1.5" fill="#904ee2"/><path d="M7.2 1.8L3.4 6.6h2.300L4.8 10.2 8.6 5.400H6.300z" fill="#fff"/></svg></span><a class="tt" style="left:133px;letter-spacing:0.030px">Authentication 0.9</a><span class="c ca"></span><span class="c cu">10...</span><span class="c cp"><svg class="eq" viewBox="0 0 8.2 6.2"><rect width="8.2" height="1.55" rx=".5" fill="#ffab00"/><rect y="4.65" width="8.2" height="1.55" rx=".5" fill="#ffab00"/></svg><span class="dots">...</span></span><span class="c cs">2023/01/17</span><span class="c cf">202</span></div>
<div class="row " style="top:274.59px"><span class="c num">1-3</span><svg class="warn" viewBox="0 0 12 11"><path d="M6 .4L11.7 10.4H.3z" fill="#e8141a"/><rect x="5.3" y="3.6" width="1.4" height="3.6" fill="#fff"/><rect x="5.3" y="8" width="1.4" height="1.4" fill="#fff"/></svg><span class="arr rt" style="left:106px"></span><span class="ti" style="left:118px"><svg class="ic" viewBox="0 0 12 12"><rect width="12" height="12" rx="1.5" fill="#904ee2"/><path d="M7.2 1.8L3.4 6.6h2.300L4.8 10.2 8.6 5.400H6.300z" fill="#fff"/></svg></span><a class="tt" style="left:133px;letter-spacing:-0.131px">Billing / KPI 0.9</a><span class="c ca"></span><span class="c cu">10...</span><span class="c cp"><svg class="eq" viewBox="0 0 8.2 6.2"><rect width="8.2" height="1.55" rx=".5" fill="#ffab00"/><rect y="4.65" width="8.2" height="1.55" rx=".5" fill="#ffab00"/></svg><span class="dots">...</span></span><span class="c cs">2022/12/29</span><span class="c cf">202</span></div>
<div class="row hl" style="top:291.92px"><span class="c num">1-5</span><span class="ti" style="left:118px"><svg class="ic" viewBox="0 0 12 12"><rect width="12" height="12" rx="1.5" fill="#4bade8"/><path d="M3 6.2l2 2L9 4" stroke="#fff" stroke-width="1.5" fill="none"/></svg></span><a class="tt" style="left:133px;letter-spacing:-0.122px">Build &amp; deploy SSO in k8s cluster</a><span class="c ca"><span class="av rd" style="background:#00a3bf;color:#0d3557">MS</span><span class="dots">...</span></span><span class="c cu">10...</span><span class="c cp"><svg class="eq" viewBox="0 0 8.2 6.2"><rect width="8.2" height="1.55" rx=".5" fill="#ffab00"/><rect y="4.65" width="8.2" height="1.55" rx=".5" fill="#ffab00"/></svg><span class="dots">...</span></span></div>
<div class="row " style="top:309.25px"><span class="c num">1-6</span><span class="arr rt" style="left:106px"></span><span class="ti" style="left:118px"><svg class="ic" viewBox="0 0 12 12"><rect width="12" height="12" rx="1.5" fill="#4bade8"/><path d="M3 6.2l2 2L9 4" stroke="#fff" stroke-width="1.5" fill="none"/></svg></span><a class="tt" style="left:133px;letter-spacing:-0.183px">Build &amp; deploy SSO UI on k8s</a><span class="c ca"><span class="av rd" style="background:#00a3bf;color:#0d3557">MS</span><span class="dots">...</span></span><span class="c cu">10...</span><span class="c cp"><svg class="eq" viewBox="0 0 8.2 6.2"><rect width="8.2" height="1.55" rx=".5" fill="#ffab00"/><rect y="4.65" width="8.2" height="1.55" rx=".5" fill="#ffab00"/></svg><span class="dots">...</span></span></div>
<div class="row " style="top:326.58px"><span class="c num">1-7</span><span class="ti" style="left:118px"><svg class="ic" viewBox="0 0 12 12"><rect width="12" height="12" rx="1.5" fill="#4bade8"/><path d="M3 6.2l2 2L9 4" stroke="#fff" stroke-width="1.5" fill="none"/></svg></span><a class="tt" style="left:133px;letter-spacing:-0.007px">Build dummy UMS to create user in same tenant by account owner</a><span class="c ca"><span class="av ph1"><i></i></span><span class="dots">...</span></span><span class="c cu">10...</span><span class="c cp"><svg class="eq" viewBox="0 0 8.2 6.2"><rect width="8.2" height="1.55" rx=".5" fill="#ffab00"/><rect y="4.65" width="8.2" height="1.55" rx=".5" fill="#ffab00"/></svg><span class="dots">...</span></span></div>
<div class="row " style="top:343.91px"><span class="c num">1-8</span><span class="ti" style="left:118px"><svg class="ic" viewBox="0 0 12 12"><rect width="12" height="12" rx="1.5" fill="#4bade8"/><path d="M3 6.2l2 2L9 4" stroke="#fff" stroke-width="1.5" fill="none"/></svg></span><a class="tt" style="left:133px;letter-spacing:-0.060px">Build Metrics Server</a><span class="c ca"><span class="av rd" style="background:#00a3bf;color:#0d3557">MS</span><span class="dots">...</span></span><span class="c cu">10...</span><span class="c cp"><svg class="eq" viewBox="0 0 8.2 6.2"><rect width="8.2" height="1.55" rx=".5" fill="#ffab00"/><rect y="4.65" width="8.2" height="1.55" rx=".5" fill="#ffab00"/></svg><span class="dots">...</span></span></div>
<div class="row " style="top:361.24px"><span class="c num">1-9</span><span class="ti" style="left:118px"><svg class="ic" viewBox="0 0 12 12"><rect width="12" height="12" rx="1.5" fill="#4bade8"/><path d="M3 6.2l2 2L9 4" stroke="#fff" stroke-width="1.5" fill="none"/></svg></span><a class="tt" style="left:133px;letter-spacing:-0.043px">Calculate total cost including infra, tools, software license, ...</a><span class="c ca"><span class="av rd" style="background:#00a3bf;color:#0d3557">JR</span><span class="dots">...</span></span><span class="c cu">10...</span><span class="c cp"><svg class="eq" viewBox="0 0 8.2 6.2"><rect width="8.2" height="1.55" rx=".5" fill="#ffab00"/><rect y="4.65" width="8.2" height="1.55" rx=".5" fill="#ffab00"/></svg><span class="dots">...</span></span></div>
<div class="row " style="top:378.57px"><span class="c num">1-10</span><span class="ti" style="left:118px"><svg class="ic" viewBox="0 0 12 12"><rect width="12" height="12" rx="1.5" fill="#4bade8"/><path d="M3 6.2l2 2L9 4" stroke="#fff" stroke-width="1.5" fill="none"/></svg></span><a class="tt" style="left:133px;letter-spacing:-0.243px">CI/CD Setup (Runner)</a><span class="c ca"><span class="av rd" style="background:#00a3bf;color:#0d3557">MS</span><span class="dots">...</span></span><span class="c cu">10...</span><span class="c cp"><svg class="eq" viewBox="0 0 8.2 6.2"><rect width="8.2" height="1.55" rx=".5" fill="#ffab00"/><rect y="4.65" width="8.2" height="1.55" rx=".5" fill="#ffab00"/></svg><span class="dots">...</span></span></div>
<div class="row hover" style="top:395.90px"><span class="c num">1-11</span><span class="arr rt" style="left:106px"></span><span class="ti" style="left:118px"><svg class="ic" viewBox="0 0 12 12"><rect width="12" height="12" rx="1.5" fill="#8d9299"/><circle cx="6" cy="6" r="2.3" fill="none" stroke="#fff" stroke-width="1.3"/></svg></span><a class="tt st" style="left:133px;letter-spacing:-0.059px">Convert proto file to OpenAPI spec</a><svg class="pen" viewBox="0 0 10 10"><path d="M0 10l.7-2.9L6.9.9l2.2 2.2-6.2 6.2z M7.6.3l.6-.3 1.8 1.8-.3.6z" fill="#333"/></svg><span class="c ca"><span class="av ph1"><i></i></span><span class="dots">...</span></span><span class="c cu">10...</span><span class="c cp"><svg class="eq" viewBox="0 0 8.2 6.2"><rect width="8.2" height="1.55" rx=".5" fill="#ffab00"/><rect y="4.65" width="8.2" height="1.55" rx=".5" fill="#ffab00"/></svg><span class="dots">...</span></span></div>
<div class="row " style="top:413.23px"><span class="c num">1-12</span><span class="arr rt" style="left:106px"></span><span class="ti" style="left:118px"><svg class="ic" viewBox="0 0 12 12"><rect width="12" height="12" rx="1.5" fill="#4bade8"/><path d="M3 6.2l2 2L9 4" stroke="#fff" stroke-width="1.5" fill="none"/></svg></span><a class="tt st" style="left:133px;letter-spacing:-0.122px">Create AWS Account (dev &amp; prod)</a><span class="c ca"><span class="av ghost"></span><span class="dots">...</span></span><span class="c cu">10...</span><span class="c cp"><svg class="eq" viewBox="0 0 8.2 6.2"><rect width="8.2" height="1.55" rx=".5" fill="#ffab00"/><rect y="4.65" width="8.2" height="1.55" rx=".5" fill="#ffab00"/></svg><span class="dots">...</span></span></div>
<div class="row " style="top:430.56px"><span class="c num">1-13</span><span class="ti" style="left:118px"><svg class="ic" viewBox="0 0 12 12"><rect width="12" height="12" rx="1.5" fill="#4bade8"/><path d="M3 6.2l2 2L9 4" stroke="#fff" stroke-width="1.5" fill="none"/></svg></span><a class="tt" style="left:133px;letter-spacing:-0.080px">Create local environment for SSO</a><span class="c ca"><span class="av rd" style="background:#00a3bf;color:#0d3557">MS</span><span class="dots">...</span></span><span class="c cu">10...</span><span class="c cp"><svg class="eq" viewBox="0 0 8.2 6.2"><rect width="8.2" height="1.55" rx=".5" fill="#ffab00"/><rect y="4.65" width="8.2" height="1.55" rx=".5" fill="#ffab00"/></svg><span class="dots">...</span></span></div>
<div class="row sel" style="top:447.89px"><span class="c num">1-4</span><svg class="warn" viewBox="0 0 12 11"><path d="M6 .4L11.7 10.4H.3z" fill="#f79a1c"/><rect x="5.3" y="3.6" width="1.4" height="3.6" fill="#fff"/><rect x="5.3" y="8" width="1.4" height="1.4" fill="#fff"/></svg><span class="arr rt" style="left:106px"></span><span class="ti" style="left:118px"><svg class="ic" viewBox="0 0 12 12"><rect width="12" height="12" rx="1.5" fill="#904ee2"/><path d="M7.2 1.8L3.4 6.6h2.300L4.8 10.2 8.6 5.400H6.300z" fill="#fff"/></svg></span><a class="tt" style="left:133px;letter-spacing:-0.174px">Create Plan 0.9</a><svg class="selbox" viewBox="0 0 484 19"><rect x="1" y="1" width="482" height="17.2" fill="none" stroke="#6e6e6e" stroke-width="1.6"/></svg><span class="c ca"></span><span class="c cu">10...</span><span class="c cp"><svg class="eq" viewBox="0 0 8.2 6.2"><rect width="8.2" height="1.55" rx=".5" fill="#ffab00"/><rect y="4.65" width="8.2" height="1.55" rx=".5" fill="#ffab00"/></svg><span class="dots">...</span></span><span class="c cs">2023/02/08 ...</span><span class="c cf">202</span></div>
<div class="row " style="top:465.22px"><span class="c num">1-14</span><span class="arr rt" style="left:106px"></span><span class="ti" style="left:118px"><svg class="ic" viewBox="0 0 12 12"><rect width="12" height="12" rx="1.5" fill="#63ba3c"/><path d="M3.300 2.300h5.400v7.600L6 7.700 3.300 9.900z" fill="#fff"/><path d="M4.700 3.700h2.600v3.400L6 6.200 4.700 7.100z" fill="#8fd06f"/></svg></span><a class="tt" style="left:133px;letter-spacing:-0.114px">Create vehicle types</a><span class="c ca"><span class="av ph2"><i></i></span><span class="dots">...</span></span><span class="c cu">10...</span><span class="c cp"><svg class="eq" viewBox="0 0 8.2 6.2"><rect width="8.2" height="1.55" rx=".5" fill="#ffab00"/><rect y="4.65" width="8.2" height="1.55" rx=".5" fill="#ffab00"/></svg><span class="dots">...</span></span><span class="c cs">2023/02/08 ...</span><span class="c cf">202</span></div>
<div class="row " style="top:482.55px"><span class="c num">1-15</span><span class="arr rt" style="left:106px"></span><span class="ti" style="left:118px"><svg class="ic" viewBox="0 0 12 12"><rect width="12" height="12" rx="1.5" fill="#4bade8"/><path d="M3 6.2l2 2L9 4" stroke="#fff" stroke-width="1.5" fill="none"/></svg></span><a class="tt st" style="left:133px;letter-spacing:-0.080px">Create/delegate SAAN domain for dev</a><span class="c ca"><span class="av rd" style="background:#00a3bf;color:#0d3557">T</span><span class="dots">...</span></span><span class="c cu">10...</span><span class="c cp"><svg class="eq" viewBox="0 0 8.2 6.2"><rect width="8.2" height="1.55" rx=".5" fill="#ffab00"/><rect y="4.65" width="8.2" height="1.55" rx=".5" fill="#ffab00"/></svg><span class="dots">...</span></span></div>
<div class="row " style="top:499.88px"><span class="c num">1-16</span><span class="ti" style="left:118px"><svg class="ic" viewBox="0 0 12 12"><rect width="12" height="12" rx="1.5" fill="#8d9299"/><circle cx="6" cy="6" r="2.3" fill="none" stroke="#fff" stroke-width="1.3"/></svg></span><a class="tt" style="left:133px;letter-spacing:-0.031px">Define Arch design policy</a><span class="c ca"><span class="av ghost"></span><span class="dots">...</span></span><span class="c cu">10...</span><span class="c cp"><svg class="eq" viewBox="0 0 8.2 6.2"><rect width="8.2" height="1.55" rx=".5" fill="#ffab00"/><rect y="4.65" width="8.2" height="1.55" rx=".5" fill="#ffab00"/></svg><span class="dots">...</span></span></div>
<div class="row " style="top:517.21px"><span class="c num">1-17</span><span class="ti" style="left:118px"><svg class="ic" viewBox="0 0 12 12"><rect width="12" height="12" rx="1.5" fill="#8d9299"/><circle cx="6" cy="6" r="2.3" fill="none" stroke="#fff" stroke-width="1.3"/></svg></span><a class="tt" style="left:133px;letter-spacing:-0.058px">Define code policy</a><span class="c ca"><span class="av ph1"><i></i></span><span class="dots">...</span></span><span class="c cu">10...</span><span class="c cp"><svg class="eq" viewBox="0 0 8.2 6.2"><rect width="8.2" height="1.55" rx=".5" fill="#ffab00"/><rect y="4.65" width="8.2" height="1.55" rx=".5" fill="#ffab00"/></svg><span class="dots">...</span></span></div>
<div class="row " style="top:534.54px"><span class="c num">1-18</span><span class="ti" style="left:118px"><svg class="ic" viewBox="0 0 12 12"><rect width="12" height="12" rx="1.5" fill="#4bade8"/><path d="M3 6.2l2 2L9 4" stroke="#fff" stroke-width="1.5" fill="none"/></svg></span><a class="tt" style="left:133px;letter-spacing:0.017px">Define default roles</a><span class="c ca"><span class="av rd" style="background:#5243aa;color:#fff">HP</span><span class="dots">...</span></span><span class="c cu">10...</span><span class="c cp"><svg class="eq" viewBox="0 0 8.2 6.2"><rect width="8.2" height="1.55" rx=".5" fill="#ffab00"/><rect y="4.65" width="8.2" height="1.55" rx=".5" fill="#ffab00"/></svg><span class="dots">...</span></span></div>
<div class="row " style="top:551.87px"><span class="c num">1-19</span><span class="ti" style="left:118px"><svg class="ic" viewBox="0 0 12 12"><rect width="12" height="12" rx="1.5" fill="#8d9299"/><circle cx="6" cy="6" r="2.3" fill="none" stroke="#fff" stroke-width="1.3"/></svg></span><a class="tt" style="left:133px;letter-spacing:-0.091px">Define DoD</a><span class="c ca"></span><span class="c cu">10...</span><span class="c cp"><svg class="eq" viewBox="0 0 8.2 6.2"><rect width="8.2" height="1.55" rx=".5" fill="#ffab00"/><rect y="4.65" width="8.2" height="1.55" rx=".5" fill="#ffab00"/></svg><span class="dots">...</span></span></div>
<div class="row " style="top:569.20px"><span class="c num">1-20</span><span class="ti" style="left:118px"><svg class="ic" viewBox="0 0 12 12"><rect width="12" height="12" rx="1.5" fill="#8d9299"/><circle cx="6" cy="6" r="2.3" fill="none" stroke="#fff" stroke-width="1.3"/></svg></span><a class="tt" style="left:133px;letter-spacing:-0.007px">Define git rule (gitflow, branch name, ...)</a><span class="c ca"><span class="av ghost"></span><span class="dots">...</span></span><span class="c cu">10...</span><span class="c cp"><svg class="eq" viewBox="0 0 8.2 6.2"><rect width="8.2" height="1.55" rx=".5" fill="#ffab00"/><rect y="4.65" width="8.2" height="1.55" rx=".5" fill="#ffab00"/></svg><span class="dots">...</span></span></div>
  </div>
  <div id="split"></div>
  <div id="gantt">
   <div class="abs" style="left:0;top:0;width:250px;height:23.500px;border-bottom:1px solid #dcdcdc"></div>
   <div class="abs" style="left:0;top:23.500px;width:250px;height:24.500px;border-bottom:2px solid #dedede"></div>
   <div class="gv" style="left:75px"></div>
   <div class="gv" style="left:151.300px;top:23.500px"></div>
   <div class="gv" style="left:227.800px;top:23.500px"></div>
   <span class="hd" style="left:27px;top:6px">2022</span>
   <span class="hd" style="left:20px;top:29.500px">2022/12</span>
   <span class="hd" style="left:96.500px;top:29.500px">2023/01</span>
   <span class="hd" style="left:172px;top:29.500px">2023/02</span>
   <div class="abs" style="left:0;top:49px;width:250px;height:362px">
<div class="gl" style="top:15.43px"></div>
<div class="gl" style="top:32.76px"></div>
<div class="gl" style="top:50.09px"></div>
<div class="gl" style="top:67.42px"></div>
<div class="gl" style="top:84.75px"></div>
<div class="gl" style="top:102.08px"></div>
<div class="gl" style="top:119.41px"></div>
<div class="gl" style="top:136.74px"></div>
<div class="gl" style="top:154.07px"></div>
<div class="gl" style="top:171.40px"></div>
<div class="gl" style="top:188.73px"></div>
<div class="gl" style="top:206.06px"></div>
<div class="gl" style="top:223.39px"></div>
<div class="gl" style="top:240.72px"></div>
<div class="gl" style="top:258.05px"></div>
<div class="gl" style="top:275.38px"></div>
<div class="gl" style="top:292.71px"></div>
<div class="gl" style="top:310.04px"></div>
<div class="gl" style="top:327.37px"></div>
<div class="gl" style="top:344.70px"></div>
<div class="gl" style="top:362.03px"></div>
   </div>
   <!-- today line -->
   <div class="abs" style="left:174.500px;top:45px;width:0;height:366px;background:repeating-linear-gradient(180deg,#707070 0,#707070 2px,transparent 2px,transparent 3.300px);width:1px"></div>
   <svg class="abs" style="left:171px;top:37px;width:8px;height:9px" viewBox="0 0 8 9"><path d="M4 .7a3 3 0 0 1 3 3C7 5.500 4 8.300 4 8.300S1 5.500 1 3.700a3 3 0 0 1 3-3z" fill="#fff" stroke="#e8141a" stroke-width="1.100"/></svg>
   <!-- bars -->
   <div class="abs" style="left:-748px;top:-174.500px;width:998px;height:600px">
<span class="glab" style="left:773.5px;top:226.00px;letter-spacing:-0.594px">SAAN</span>
<div class="bar" style="left:818px;top:225.30px;width:180.0px;height:6.6px"></div><div class="bar" style="left:818px;top:225.30px;width:37.0px;height:6.6px;background:#a5e6bf"></div><div class="abs" style="left:818px;top:231.70px;width:0;height:0;border-top:5.4px solid #2cc56f;border-right:5.4px solid transparent"></div>
<span class="glab" style="left:928.3px;top:243.33px;letter-spacing:-0.141px">Apply changes</span>
<span class="glab" style="left:766.9px;top:260.66px;letter-spacing:0.013px">Authentication 0.9</span>
<div class="bar" style="left:863.8px;top:259.96px;width:119.2px;height:6.6px"></div><div class="bar" style="left:863.8px;top:259.96px;width:13.6px;height:6.6px;background:#a5e6bf"></div><div class="abs" style="left:863.8px;top:266.36px;width:0;height:0;border-top:5.4px solid #2cc56f;border-right:5.4px solid transparent"></div><div class="abs" style="left:977.6px;top:266.36px;width:0;height:0;border-top:5.4px solid #2cc56f;border-left:5.4px solid transparent"></div>
<span class="glab" style="left:748.4px;top:277.99px;letter-spacing:-0.244px">ing / KPI 0.9</span>
<div class="abs" style="left:817.7px;top:276.79px;width:1.3px;height:6.4px;background:#7ddba5"></div>
<span class="glab" style="left:836.5px;top:451.29px;letter-spacing:-0.221px">Create Plan 0.9</span>
<div class="bar" style="left:920px;top:450.59px;width:78.0px;height:6.6px"></div><div class="abs" style="left:920px;top:456.99px;width:0;height:0;border-top:5.4px solid #2cc56f;border-right:5.4px solid transparent"></div>
<span class="glab" style="left:815.3px;top:468.62px;letter-spacing:-0.109px">Create vehicle types</span>
<div class="bar" style="left:920px;top:467.92px;width:78.0px;height:6.6px"></div><div class="abs" style="left:920px;top:474.32px;width:0;height:0;border-top:5.4px solid #2cc56f;border-right:5.4px solid transparent"></div>
   </div>
  </div>
 </div>
</div>

</body>
</html>
